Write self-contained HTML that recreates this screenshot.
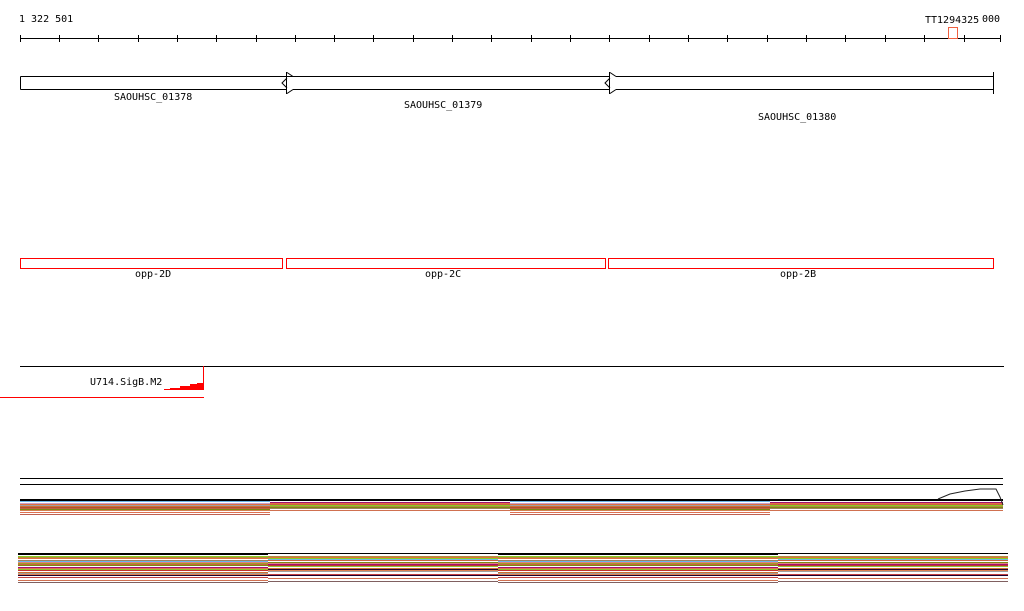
<!DOCTYPE html>
<html><head><meta charset="utf-8"><style>
body{margin:0;background:#fff;width:1024px;height:611px;overflow:hidden;position:relative;font-family:"DejaVu Sans Mono","Liberation Mono",monospace;}
.t{position:absolute;font-size:10px;color:#000;white-space:nowrap;}
.b{position:absolute;}
.g1{background:linear-gradient(to bottom,#000 0,#000 2px,#6ab7e8 2px,#6ab7e8 3px,#fff 3px,#fff 4px,#c8a0c8 4px,#c8a0c8 5px,#e07040 5px,#e07040 6px,#a0a0a0 6px,#a0a0a0 7px,#d07030 7px,#d07030 8px,#b05030 8px,#b05030 9px,#c06040 9px,#c06040 10px,#7a8a10 10px,#7a8a10 11px,#d08050 11px,#d08050 12px,#fff 12px,#fff 13px,#e07050 13px,#e07050 14px,#fff 14px,#fff 15px,#c06050 15px,#c06050 16px);}
.g2{background:linear-gradient(to bottom,#000 0,#000 2px,#fff 2px,#fff 3px,#a01070 3px,#a01070 4px,#e07040 4px,#e07040 5px,#c86040 5px,#c86040 6px,#8acc20 6px,#8acc20 7px,#b09040 7px,#b09040 8px,#7a8a10 8px,#7a8a10 9px,#a08060 9px,#a08060 10px,#fff 10px,#fff 11px,#d07050 11px,#d07050 12px,#fff 12px,#fff 16px);}
.g3{background:linear-gradient(to bottom,#000 0,#000 2px,#fff 2px,#fff 3px,#8acc20 3px,#8acc20 4px,#b09040 4px,#b09040 5px,#e07040 5px,#e07040 6px,#fff 6px,#fff 7px,#a08060 7px,#a08060 8px,#6ab7e8 8px,#6ab7e8 9px,#e08080 9px,#e08080 10px,#a0a020 10px,#a0a020 11px,#c86040 11px,#c86040 12px,#7a8a10 12px,#7a8a10 13px,#fff 13px,#fff 14px,#a01070 14px,#a01070 15px,#e07050 15px,#e07050 16px,#90c030 16px,#90c030 17px,#c03030 17px,#c03030 18px,#fff 18px,#fff 19px,#d07030 19px,#d07030 20px,#a0a0a0 20px,#a0a0a0 21px,#e08050 21px,#e08050 22px,#200030 22px,#200030 23px,#fff 23px,#fff 24px,#c04040 24px,#c04040 25px,#fff 25px,#fff 27px,#d07050 27px,#d07050 28px,#fff 28px,#fff 29px,#806060 29px,#806060 30px,#fff 30px);}
.g4{background:linear-gradient(to bottom,#000 0,#000 1px,#fff 1px,#fff 3px,#b09040 3px,#b09040 4px,#e07040 4px,#e07040 5px,#8acc20 5px,#8acc20 6px,#6ab7e8 6px,#6ab7e8 7px,#c86040 7px,#c86040 8px,#fff 8px,#fff 9px,#7a8a10 9px,#7a8a10 10px,#e08080 10px,#e08080 11px,#a01070 11px,#a01070 12px,#c03030 12px,#c03030 13px,#90c030 13px,#90c030 14px,#fff 14px,#fff 15px,#d07030 15px,#d07030 16px,#200030 16px,#200030 17px,#e08050 17px,#e08050 18px,#a0a0a0 18px,#a0a0a0 19px,#fff 19px,#fff 21px,#c04040 21px,#c04040 22px,#200030 22px,#200030 23px,#fff 23px,#fff 25px,#d07050 25px,#d07050 26px,#fff 26px,#fff 28px,#806060 28px,#806060 29px,#fff 29px);}
</style></head><body>
<svg width="1024" height="611" style="position:absolute;left:0;top:0" shape-rendering="crispEdges">
<line x1="20" y1="38.5" x2="1001" y2="38.5" stroke="#000"/>
<g stroke="#000">
<line x1="20.5" y1="35" x2="20.5" y2="42"/><line x1="59.5" y1="35" x2="59.5" y2="42"/><line x1="98.5" y1="35" x2="98.5" y2="42"/><line x1="138.5" y1="35" x2="138.5" y2="42"/><line x1="177.5" y1="35" x2="177.5" y2="42"/><line x1="216.5" y1="35" x2="216.5" y2="42"/><line x1="256.5" y1="35" x2="256.5" y2="42"/><line x1="295.5" y1="35" x2="295.5" y2="42"/><line x1="334.5" y1="35" x2="334.5" y2="42"/><line x1="373.5" y1="35" x2="373.5" y2="42"/><line x1="413.5" y1="35" x2="413.5" y2="42"/><line x1="452.5" y1="35" x2="452.5" y2="42"/><line x1="491.5" y1="35" x2="491.5" y2="42"/><line x1="531.5" y1="35" x2="531.5" y2="42"/><line x1="570.5" y1="35" x2="570.5" y2="42"/><line x1="609.5" y1="35" x2="609.5" y2="42"/><line x1="649.5" y1="35" x2="649.5" y2="42"/><line x1="688.5" y1="35" x2="688.5" y2="42"/><line x1="727.5" y1="35" x2="727.5" y2="42"/><line x1="767.5" y1="35" x2="767.5" y2="42"/><line x1="806.5" y1="35" x2="806.5" y2="42"/><line x1="845.5" y1="35" x2="845.5" y2="42"/><line x1="885.5" y1="35" x2="885.5" y2="42"/><line x1="924.5" y1="35" x2="924.5" y2="42"/><line x1="964.5" y1="35" x2="964.5" y2="42"/><line x1="1000.5" y1="35" x2="1000.5" y2="42"/>
</g>
<rect x="948.5" y="27.5" width="9" height="11" fill="none" stroke="#f06040"/>
<g fill="none" stroke="#000" shape-rendering="auto">
<path d="M20.5 76.5H286.5M20.5 89.5H286.5M20.5 76.5V89.5"/>
<path d="M286.5 72V94M287 76.5H293M293 76.5H609.5M293 89.5H609.5M293 76.5L287 72.5M293 89.5L287 93.5M287 78L282 83L287 88"/>
<path d="M609.5 72V94M616 76.5H993.5M616 89.5H993.5M616 76.5L610 72.5M616 89.5L610 93.5M610 78L605 83L610 88M993.5 72V94"/>
</g>
<rect x="20.5" y="258.5" width="262" height="10" fill="none" stroke="#f00"/>
<rect x="286.5" y="258.5" width="319" height="10" fill="none" stroke="#f00"/>
<rect x="608.5" y="258.5" width="385" height="10" fill="none" stroke="#f00"/>
<line x1="282.5" y1="258" x2="282.5" y2="269" stroke="#f00"/>
<line x1="605.5" y1="258" x2="605.5" y2="269" stroke="#f00"/>
<line x1="20" y1="366.5" x2="1004" y2="366.5" stroke="#000"/>
<line x1="203.5" y1="366" x2="203.5" y2="390" stroke="#f00"/>
<path d="M164 389L170 389L170 388L180 388L180 386L190 386L190 384L197 384L197 383L203 383L203 390L164 390Z" fill="#f00"/>
<rect x="0" y="397" width="204" height="1" fill="#f00"/>
<line x1="20" y1="478.5" x2="1003" y2="478.5" stroke="#000"/>
<line x1="20" y1="484.5" x2="1003" y2="484.5" stroke="#000"/>
</svg>
<div class="b g1" style="left:20px;top:499px;width:250px;height:16px"></div>
<div class="b g2" style="left:270px;top:499px;width:240px;height:16px"></div>
<div class="b g1" style="left:510px;top:499px;width:260px;height:16px"></div>
<div class="b g2" style="left:770px;top:499px;width:233px;height:16px"></div>
<div class="b g3" style="left:18px;top:553px;width:250px;height:31px"></div>
<div class="b g4" style="left:268px;top:553px;width:230px;height:31px"></div>
<div class="b g3" style="left:498px;top:553px;width:280px;height:31px"></div>
<div class="b g4" style="left:778px;top:553px;width:230px;height:31px"></div>
<svg width="1024" height="611" style="position:absolute;left:0;top:0">
<path d="M938 499L950 494L965 491L980 489L996 489L1000 497L1003 505" fill="none" stroke="#222"/>
</svg>
<div class="t" style="left:19px;top:14px">1 322 501</div>
<div class="t" style="left:925px;top:15px">TT1294325</div>
<div class="t" style="left:982px;top:14px">000</div>
<div class="t" style="left:114px;top:92px">SAOUHSC_01378</div>
<div class="t" style="left:404px;top:100px">SAOUHSC_01379</div>
<div class="t" style="left:758px;top:112px">SAOUHSC_01380</div>
<div class="t" style="left:135px;top:269px">opp-2D</div>
<div class="t" style="left:425px;top:269px">opp-2C</div>
<div class="t" style="left:780px;top:269px">opp-2B</div>
<div class="t" style="left:90px;top:377px">U714.SigB.M2</div>
</body></html>
